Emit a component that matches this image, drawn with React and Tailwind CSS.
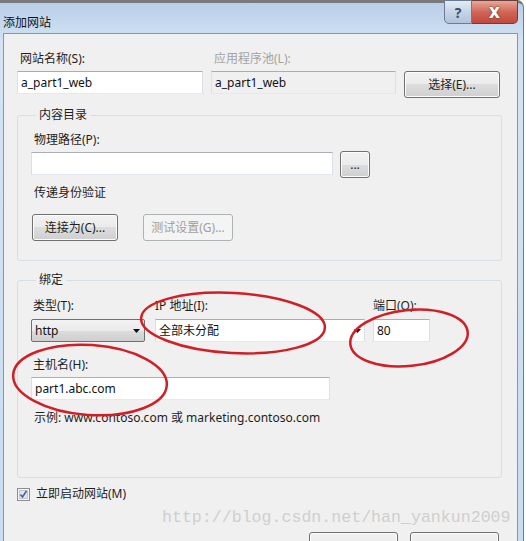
import React from "react";

const ui = { fontFamily: '"Noto Sans", "Noto Sans CJK SC", sans-serif' };

function Label({ children, muted, className = "" }) {
  return (
    <div
      className={`h-[16px] leading-[16px] text-[12px] whitespace-nowrap ${
        muted ? "text-[#a3a3a3]" : "text-[#1e1e1e]"
      } ${className}`}
    >
      {children}
    </div>
  );
}

function TextBox({ value, className = "", readOnly }) {
  return (
    <div
      className={`h-[23px] border border-t-[#abadb3] border-x-[#dbdfe6] border-b-[#e3e9ef] px-[3px] leading-[21px] text-[12px] text-[#111] whitespace-nowrap ${
        readOnly ? "bg-[#f0f0f0]" : "bg-white"
      } ${className}`}
    >
      {value}
    </div>
  );
}

function Button({ children, disabled, className = "" }) {
  return (
    <div
      className={`h-[27px] rounded-[3px] border flex items-center justify-center text-[12px] whitespace-nowrap ${
        disabled
          ? "border-[#adb2b5] bg-[#f4f4f4] text-[#a0a0a0]"
          : "border-[#707070] bg-[linear-gradient(#f2f2f2_0%,#ebebeb_50%,#dddddd_50%,#cfcfcf_100%)] text-[#1e1e1e] shadow-[inset_0_0_0_1px_#fcfcfc]"
      } ${className}`}
    >
      {children}
    </div>
  );
}

function Arrow() {
  return (
    <svg width="7" height="4" viewBox="0 0 7 4">
      <path d="M0 0h7L3.5 4z" fill="#111" />
    </svg>
  );
}

export default function App() {
  return (
    <div className="relative w-[526px] h-[541px] bg-white overflow-hidden" style={ui}>
      <div className="w-[524px] h-[560px] rounded-tr-[7px] border-t-[3px] border-r border-t-[#7a7a7a] border-r-[#6d7c8e] bg-[linear-gradient(#b9cfe8,#d3e3f4_40px,#c9dcf1)] flex flex-col">
        <div className="h-[33px] flex items-start justify-between pl-[3px] pr-[5px]">
          <div className="mt-[12px] text-[12px] leading-[16px] text-[#111]">添加网站</div>
          <div className="flex -mt-[3px]">
            <div className="w-[28px] h-[24px] border border-[#6b7b90] rounded-bl-[5px] bg-[linear-gradient(#e4ecf5,#c4d4e6_50%,#b1c4da)] flex items-center justify-center text-[14px] font-bold text-[#3d4d66]">
              ?
            </div>
            <div className="w-[46px] h-[24px] border border-l-0 border-[#6b3f3f] rounded-br-[5px] bg-[linear-gradient(#e8a898,#d06656_50%,#c04a3c)] flex items-center justify-center text-[15px] font-black text-white [text-shadow:0_0_2px_#4a1410]">
              X
            </div>
          </div>
        </div>

        <div className="ml-[3px] mr-[5px] flex-1 border border-[#8497ae] bg-[#f0f0f0] pl-[13px] pt-[17px]">
          <div className="flex items-start">
            <div className="w-[186px]">
              <Label className="pl-[3px] mb-[4px]">网站名称(S):</Label>
              <TextBox value="a_part1_web" />
            </div>
            <div className="w-[185px] ml-[8px]">
              <Label muted className="pl-[3px] mb-[4px]">应用程序池(L):</Label>
              <TextBox value="a_part1_web" readOnly className="border-[#d9dcdf]" />
            </div>
            <Button className="w-[96px] ml-[8px] mt-[20px]">选择(E)...</Button>
          </div>

          <fieldset className="mt-[9px] w-[485px] border border-[#d5dfe5] rounded-[3px] pl-[13px] pt-[9px] pb-[19px]">
            <legend className="ml-[5px] px-[3px] text-[12px] leading-[16px] text-[#1e1e1e]">内容目录</legend>
            <Label className="pl-[3px] mb-[3px]">物理路径(P):</Label>
            <div className="flex items-start">
              <TextBox value="" className="w-[302px] mt-[1px]" />
              <Button className="w-[30px] ml-[7px] text-[10px]">...</Button>
            </div>
            <Label className="pl-[3px] mt-[7px]">传递身份验证</Label>
            <div className="flex mt-[13px]">
              <Button className="w-[86px] ml-[1px]">连接为(C)...</Button>
              <Button disabled className="w-[90px] ml-[25px]">测试设置(G)...</Button>
            </div>
          </fieldset>

          <fieldset className="mt-[11px] w-[485px] border border-[#d5dfe5] rounded-[3px] pl-[13px] pt-[10px] pb-[51px]">
            <legend className="ml-[5px] px-[3px] text-[12px] leading-[16px] text-[#1e1e1e]">绑定</legend>
            <div className="flex items-start">
              <div className="w-[114px]">
                <Label className="pl-[2px] mb-[5px]">类型(T):</Label>
                <div className="h-[23px] rounded-[2px] border border-[#707070] bg-[linear-gradient(#f2f2f2_0%,#ebebeb_50%,#dddddd_50%,#cfcfcf_100%)] flex items-center justify-between pl-[3px] pr-[4px] text-[12px] text-[#111]">
                  <span>http</span>
                  <Arrow />
                </div>
              </div>
              <div className="w-[210px] ml-[10px]">
                <Label className="mb-[5px]">IP 地址(I):</Label>
                <div className="h-[23px] border border-t-[#abadb3] border-x-[#dbdfe6] border-b-[#e3e9ef] bg-white flex items-center justify-between pl-[3px] pr-[3px] text-[12px] text-[#111]">
                  <span>全部未分配</span>
                  <Arrow />
                </div>
              </div>
              <div className="w-[57px] ml-[8px]">
                <Label className="mb-[5px]">端口(O):</Label>
                <TextBox value="80" />
              </div>
            </div>
            <Label className="pl-[2px] mt-[15px] mb-[4px]">主机名(H):</Label>
            <TextBox value="part1.abc.com" className="w-[299px]" />
            <Label className="pl-[3px] mt-[10px]">示例: www.contoso.com 或 marketing.contoso.com</Label>
          </fieldset>

          <div className="flex items-center mt-[8px] h-[16px]">
            <svg width="13" height="13" viewBox="0 0 13 13">
              <rect x="0.5" y="0.5" width="12" height="12" fill="#f4f4f4" stroke="#8e8f8f" />
              <rect x="2.5" y="2.5" width="8" height="8" fill="#dfe5ec" stroke="#c0c8d2" />
              <path d="M3.5 6.5l2 2.5 4-6" fill="none" stroke="#4a5f97" strokeWidth="1.6" />
            </svg>
            <span className="ml-[6px] text-[12px] text-[#1e1e1e]">立即启动网站(M)</span>
          </div>

          <div
            className="mt-[6px] ml-[145px] h-[20px] leading-[20px] text-[16.6px] text-[#cfcfcf] whitespace-nowrap"
            style={{ fontFamily: '"Liberation Mono", monospace' }}
          >
            http://blog.csdn.net/han_yankun2009
          </div>

          <div className="flex justify-end gap-[12px] pr-[18px] mt-[4px]">
            <Button className="w-[89px]" />
            <Button className="w-[89px]" />
          </div>
        </div>
      </div>

      <svg className="absolute inset-0 pointer-events-none" width="526" height="541" viewBox="0 0 526 541">
        <g fill="none" stroke="#d01f26" strokeWidth="2.5">
          <ellipse cx="233" cy="323" rx="92" ry="30" transform="rotate(3 233 323)" />
          <ellipse cx="409" cy="338" rx="59" ry="28" transform="rotate(-6 409 338)" />
          <ellipse cx="90" cy="380" rx="77" ry="35" transform="rotate(4 90 380)" />
        </g>
      </svg>
    </div>
  );
}
